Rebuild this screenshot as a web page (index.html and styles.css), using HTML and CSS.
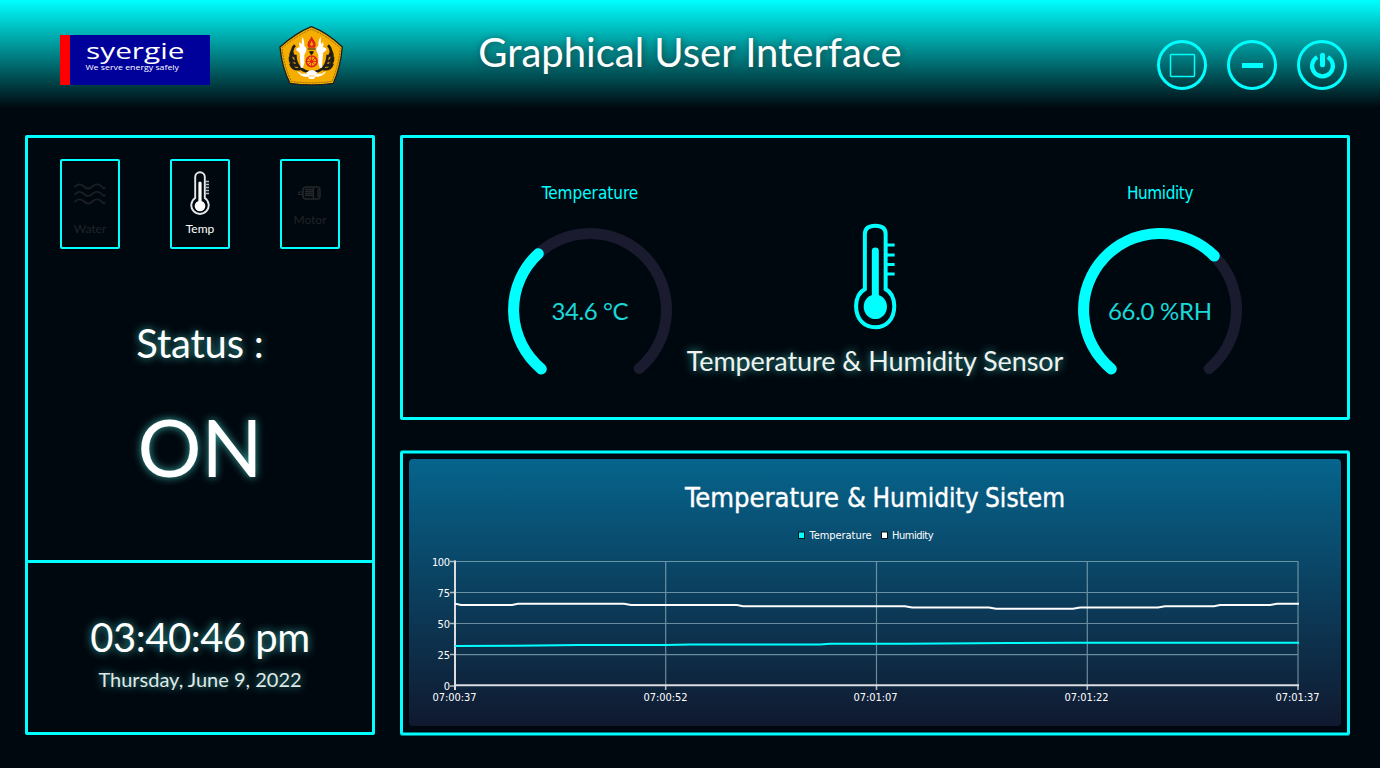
FILE: index.html
```html
<!DOCTYPE html>
<html lang="en">
<head>
<meta charset="utf-8">
<title>Graphical User Interface</title>
<link rel="stylesheet" href="styles.css">
</head>
<body>
<header class="header">
  <div class="logos">
    <svg class="logo" viewBox="0 0 150 50" width="150" height="50">
      <rect width="150" height="50" fill="#00009b"/>
      <rect width="10" height="50" fill="#fe0000"/>
      <text x="26" y="24.2" font-size="21" textLength="98.5" lengthAdjust="spacingAndGlyphs">syergie</text>
      <text x="25.5" y="35" font-size="6.8" textLength="93.5" lengthAdjust="spacingAndGlyphs">We serve energy safely</text>
    </svg>
    <svg class="emblem" viewBox="27 18 192 180" width="64" height="60">
      <path d="M124 20Q79 38 30 81Q35 140 60 190Q124 200 190 190Q212 140 217 81Q172 38 124 20Z" fill="#f5ae00" stroke="#1c2020" stroke-width="4"/>
      <path d="M124 28Q83 44 36 84Q41 136 64 184Q124 193 186 184Q206 136 211 84Q166 44 124 28Z" fill="none" stroke="#292519" stroke-width="1.4" stroke-dasharray="6 3"/>
      <path d="M75 76C62 88 65 100 72 111M66 92C58 107 63 119 74 126M60 111C58 126 66 137 82 137M61 130C65 144 76 150 92 147M174 76C187 88 184 100 177 111M183 92C191 107 186 119 175 126M189 111C191 126 183 137 167 137M188 130C184 144 173 150 157 147" fill="none" stroke="#211d18" stroke-width="8"/>
      <path d="M76 104Q76 148 117 156L135 156Q172 148 173 104" fill="none" stroke="#211d18" stroke-width="8"/>
      <path d="M96 50Q104 61 103 77L109 84V92L103 105V130L99 143H92L89 99L78 89Q79 83 90 81Q86 74 88 66L95 73Z" fill="#fff"/>
      <path d="M152 50Q144 61 145 77L139 84V92L145 105V130L149 143H156L159 99L170 89Q169 83 158 81Q162 74 160 66L153 73Z" fill="#fff"/>
      <path d="M125 49Q119 60 114 66Q110 76 115 83H134Q140 76 135 66Q129 59 125 49Z" fill="#df2518"/>
      <path d="M125 63L120 74Q124 80 130 74Z" fill="#f5ae00"/>
      <path d="M113 87H137M119 95H130L126 103H123Z" fill="#211d18" stroke="#211d18" stroke-width="3"/>
      <circle cx="125" cy="124" r="16" fill="#f5ae00" stroke="#df2518" stroke-width="5"/>
      <path d="M125 108V140M109 124H141M114 113L136 135M136 113L114 135" stroke="#df2518" stroke-width="3"/>
      <circle cx="125" cy="124" r="5" fill="#df2518"/>
      <path d="M82 154Q99 165 112 156L119 151H131L139 156Q151 165 168 154Q163 167 145 170H136L132 177H118L114 170H104Q89 168 82 154Z" fill="#fff"/>
      <path d="M91 161H112M139 161H160M116 168H134" stroke="#f5ae00" stroke-width="2"/>
    </svg>
  </div>
  <h1 class="title">Graphical User Interface</h1>
  <div class="window-buttons">
    <button class="round"><svg viewBox="0 0 50 50" width="50" height="50"><rect x="13.5" y="14.5" width="24" height="22" rx="1" fill="none" stroke="#0ff" stroke-width="1.5"/></svg></button>
    <button class="round"><svg viewBox="0 0 50 50" width="50" height="50"><rect x="15" y="23" width="21" height="5" fill="#0ff"/></svg></button>
    <button class="round"><svg viewBox="0 0 50 50" width="50" height="50"><path d="M20.2 17A10.4 10.4 0 1 0 30.8 17" fill="none" stroke="#0ff" stroke-width="4.2"/><path d="M25.5 15.2V24.8" stroke="#0ff" stroke-width="5" stroke-linecap="round"/></svg></button>
  </div>
</header>

<main class="main">
  <aside class="side">
    <section class="control">
      <nav class="tabs">
        <div class="tab muted">
          <svg viewBox="0 0 32 24" width="32" height="24"><path d="M.5 4C4 .5 7 .5 10 3.500S16 6 19 3S26 1.500 28 4S31 4.500 31.500 4.500M.5 11.500C4 8 7 8 10 11S16 13.500 19 10.500S26 9 28 11.500S31 12 31.500 12M.5 19C4 15.500 7 15.500 10 18.500S16 21 19 18S26 16.500 28 19S31 19.500 31.500 19.500" fill="none" stroke="#1b1f24" stroke-width="1.8"/></svg>
          <span class="tab-name water-name">Water</span>
        </div>
        <div class="tab active">
          <svg viewBox="0 0 20 45" width="20" height="45"><path d="M5.200 27V6A4.800 4.800 0 0 1 14.800 6V27A8.700 8.700 0 1 1 5.200 27Z" fill="none" stroke="#e6e8eb" stroke-width="1.900"/><path d="M10 12V33" stroke="#fff" stroke-width="3.200" stroke-linecap="round"/><circle cx="10" cy="35" r="5.300" fill="#fff"/><path d="M15 10.500H19M15 13.500H19M15 16.500H19M15 19.500H19M15 22.500H19" stroke="#b9bdc1" stroke-width="1.300"/></svg>
          <span class="tab-name">Temp</span>
        </div>
        <div class="tab muted motor">
          <svg viewBox="0 0 24 14" width="24" height="14"><path d="M.5 6H5M.5 8.500H5M.7 6V8.500" stroke="#25272a" stroke-width="1.200"/><rect x="5" y="1" width="17" height="12" rx="3" fill="none" stroke="#25272a" stroke-width="1.500"/><path d="M7 3.500H15M7 5.500H15M7 7.500H15M7 9.500H15M15.500 1V13M20 3V11" stroke="#25272a" stroke-width="1.300"/></svg>
          <span class="tab-name motor-name">Motor</span>
        </div>
      </nav>
      <div class="status glow">Status :</div>
      <div class="state glow">ON</div>
    </section>
    <section class="clock">
      <div class="time glow">03:40:46 pm</div>
      <div class="date glow">Thursday, June 9, 2022</div>
    </section>
  </aside>

  <div class="content">
    <section class="panel gauges">
      <div class="gauge">
        <div class="gauge-name">Temperature</div>
        <svg viewBox="-82 -82 164 164" width="164" height="164">
          <path d="M-49.200 58.600A76.500 76.500 0 1 1 49.200 58.600" class="track"/>
          <path d="M-48.700 58.900A76.500 76.500 0 0 1 -51.700 -56.300" class="value-arc"/>
          <text x="0" y="9.500" textLength="77" class="reading">34.6 °C</text>
        </svg>
      </div>
      <div class="sensor">
        <svg viewBox="520 40 132 322" width="44" height="107">
          <path d="M555.500 239V73Q556 48 587 48Q618 48 618 73V239Q643 252 644 290C644 332 618 354 587 354C556 354 529 332 529 290Q530 252 555.500 239Z" fill="none" stroke="#0ff" stroke-width="12"/>
          <path d="M587 124V270" stroke="#0ff" stroke-width="21" stroke-linecap="round"/>
          <ellipse cx="587" cy="292" rx="35" ry="37" fill="#0ff"/>
          <path d="M620 106H645M620 136H645M620 165H645M620 193.500H645" stroke="#0ff" stroke-width="9"/>
        </svg>
        <div class="sensor-name glow">Temperature &amp; Humidity Sensor</div>
      </div>
      <div class="gauge">
        <div class="gauge-name humidity-name">Humidity</div>
        <svg viewBox="-82 -82 164 164" width="164" height="164">
          <path d="M-49.200 58.600A76.500 76.500 0 1 1 49.200 58.600" class="track"/>
          <path d="M-48.700 58.900A76.500 76.500 0 1 1 54.300 -54" class="value-arc"/>
          <text x="0" y="9.500" textLength="104" class="reading">66.0 %RH</text>
        </svg>
      </div>
    </section>

    <section class="panel chart-panel">
      <div class="chart">
        <svg viewBox="409 459 932 267" width="932" height="267">
          <text y="507" class="chart-title"><tspan x="685" textLength="154" lengthAdjust="spacingAndGlyphs">Temperature</tspan> <tspan x="847">&amp;</tspan> <tspan x="872.500" textLength="106" lengthAdjust="spacingAndGlyphs">Humidity</tspan> <tspan x="985" textLength="80" lengthAdjust="spacingAndGlyphs">Sistem</tspan></text>
          <rect x="798.500" y="532" width="6" height="6.500" fill="#0ff" stroke="#001219"/>
          <text x="809.500" y="539" class="label" textLength="62">Temperature</text>
          <rect x="881.500" y="532" width="6" height="6.500" fill="#fff" stroke="#001219"/>
          <text x="892" y="539" class="label" textLength="41.500">Humidity</text>
          <g stroke="#8bacb8" stroke-opacity=".75" stroke-width="1.200">
            <path d="M455 561.500H1298.500M455 592.500H1298M455 623.500H1298M455 654.700H1298M665.700 562V686M876.500 562V686M1087.300 562V686M1298 562V686"/>
          </g>
          <path d="M450 561.500H456M450 592.500H455M450 623.500H455M450 654.500H455M450 686H455M665.700 686V690M876.500 686V690M1087.300 686V690M1298 686V690" stroke="#a9bac2" stroke-width="1.600"/>
          <path d="M455 560.500V690M454 685.300H1299" stroke="#dbdde2" stroke-width="2"/>
          <path d="M455 603.600L461 605H512L518 603.800H624L631 605H737L743 606.200H905L912 607.500H989L996 608.800H1073L1080 607.500H1158L1165 606.200H1214L1220 605H1270L1277 603.800H1299" fill="none" stroke="#fff" stroke-width="2"/>
          <path d="M455 646L515 645.700L580 645L665 644.900L690 644.400H820L830 643.700H905L1010 643L1070 642.700H1299" fill="none" stroke="#0ff" stroke-width="2"/>
          <g class="label ylabels">
            <text x="450" y="566" textLength="18">100</text><text x="450" y="597">75</text><text x="450" y="628">50</text><text x="450" y="659">25</text><text x="450" y="690">0</text>
          </g>
          <g class="label xlabels">
            <text x="454.500" y="701" textLength="44">07:00:37</text><text x="665.500" y="701" textLength="44">07:00:52</text><text x="875.500" y="701" textLength="44">07:01:07</text><text x="1086.500" y="701" textLength="44">07:01:22</text><text x="1297.500" y="701" textLength="44">07:01:37</text>
          </g>
        </svg>
      </div>
    </section>
  </div>
</main>
</body>
</html>
```

FILE: styles.css
```css
* { box-sizing: border-box; }
body {
  margin: 0;
  width: 1380px;
  height: 768px;
  overflow: hidden;
  background: #00080f;
  color: #fff;
  font-family: Lato, "Noto Sans", sans-serif;
  white-space: nowrap;
}
svg { display: block; flex: none; }
.header {
  height: 110px;
  padding: 0 33px 0 60px;
  display: grid;
  grid-template-columns: 417px 426px 1fr;
  background: linear-gradient(#00ffff, #00080f 108px);
}
.logos { display: flex; align-items: flex-start; gap: 69px; }
.logo { margin-top: 35px; font-family: "Open Sans", "Noto Sans", sans-serif; fill: #fff; }
.emblem { margin-top: 26px; }
.title {
  margin: 22px 0 0;
  font-size: 40px;
  font-weight: 400;
  line-height: 60px;
  text-align: center;
  text-shadow: 1px 1px 7px rgba(20, 70, 70, .9);
}
.window-buttons { display: flex; justify-content: flex-end; gap: 20px; padding-top: 40px; }
.round {
  width: 50px;
  height: 50px;
  padding: 0;
  border: 3px solid #0ff;
  border-radius: 50%;
  background: none;
  display: grid;
  place-content: center;
}
.main { display: flex; gap: 25px; padding: 25px 30px 0 25px; }
.side { width: 350px; height: 600px; border: 3px solid #0ff; border-radius: 2px; text-align: center; }
.control { height: 422px; padding-top: 21px; }
.tabs { display: flex; justify-content: center; gap: 50px; }
.tab {
  width: 60px;
  height: 90px;
  border: 2px solid #0ff;
  border-radius: 2px;
  display: flex;
  flex-direction: column;
  align-items: center;
  justify-content: flex-end;
  padding-bottom: 10px;
  font-size: 12px;
  line-height: 16px;
}
.muted { color: #202327; }
.water-name { margin-top: 14px; }
.tab.active { gap: 5px; }
.tab.motor { padding-bottom: 19px; gap: 12px; }
.glow { text-shadow: 0 0 8px rgba(66, 200, 190, .85); }
.status { margin-top: 70px; font-size: 40px; line-height: 48px; letter-spacing: -.2px; }
.state { margin-top: 31px; font-size: 80px; line-height: 96px; }
.clock { height: 172px; border-top: 3px solid #0ff; padding-top: 50px; }
.time { font-size: 40px; line-height: 48px; letter-spacing: -.5px; }
.date { margin-top: 6px; font-size: 20px; line-height: 24px; color: #e1e8e8; }
.content { width: 950px; }
.panel { border: 3px solid #0ff; border-radius: 2px; }
.gauges { height: 285px; display: flex; justify-content: center; }
.gauge { width: 190px; padding-top: 43px; display: flex; flex-direction: column; align-items: center; gap: 23px; }
.gauge-name { font: 17px/24px "DejaVu Sans Condensed", "DejaVu Sans", sans-serif; color: #0ff; }
.humidity-name { letter-spacing: -.4px; }
.track, .value-arc { fill: none; stroke: #1b1b2f; stroke-width: 11px; stroke-linecap: round; }
.value-arc { stroke: #0ff; }
.reading { font-size: 24px; fill: #1ad7d8; text-anchor: middle; }
.sensor { width: 380px; padding-top: 85px; display: flex; flex-direction: column; align-items: center; gap: 14px; }
.sensor-name { font-size: 27px; line-height: 34px; letter-spacing: -.08px; color: #eef3f2; }
.chart-panel {
  height: 284px;
  margin-top: 31px;
  padding: 6px;
  border-width: 2px 3px;
  box-shadow: 0 -1px #008187, 0 1px #008187, inset 0 1px #008187, inset 0 -1px #008187;
}
.chart { height: 267px; border-radius: 4px; overflow: hidden; background: linear-gradient(#06648c, #10192f); }
.chart-title { font: 27px "DejaVu Sans Condensed", "DejaVu Sans", sans-serif; fill: #fff; stroke: #fff; stroke-width: .4px; }
.label { font: 11px "DejaVu Sans Condensed", "DejaVu Sans", sans-serif; fill: #fff; }
.ylabels { text-anchor: end; }
.xlabels { text-anchor: middle; }
```
